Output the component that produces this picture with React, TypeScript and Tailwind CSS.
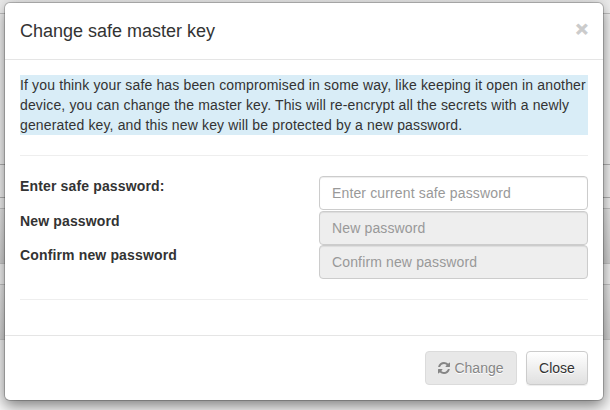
import type { ReactNode } from 'react';

function RefreshIcon() {
  return (
    <svg viewBox="0 128 1536 1536" className="mr-1 h-3 w-3 fill-current" aria-hidden="true">
      <path d="M1511 1056q0 5-1 7-64 268-268 434.5t-478 166.5q-146 0-282.5-55t-243.5-157l-129 129q-19 19-45 19t-45-19-19-45v-448q0-26 19-45t45-19h448q26 0 45 19t19 45-19 45l-137 137q71 66 161 102t187 36q134 0 250-65t186-179q11-17 53-117 8-23 30-23h192q13 0 22.5 9.5t9.5 22.5zm25-800v448q0 26-19 45t-45 19h-448q-26 0-45-19t-19-45 19-45l138-138q-148-137-349-137-134 0-250 65t-186 179q-11 17-53 117-8 23-30 23h-199q-13 0-22.5-9.5t-9.5-22.5v-7q65-268 270-434.5t480-166.5q146 0 284 55.5t245 156.5l130-129q19-19 45-19t45 19 19 45z" />
    </svg>
  );
}

function Field({ label, placeholder, disabled, className }: { label: ReactNode; placeholder: string; disabled?: boolean; className?: string }) {
  return (
    <div className={`flex justify-between ${className ?? ''}`}>
      <label className="h-5 font-bold leading-5">{label}</label>
      <input
        type="text"
        placeholder={placeholder}
        disabled={disabled}
        className="h-[34px] w-[269px] rounded border border-[#ccc] bg-white px-3 py-1.5 leading-5 tracking-[0.14px] shadow-[inset_0_1px_1px_rgba(0,0,0,0.075)] placeholder:text-[#999] disabled:bg-[#eee]"
      />
    </div>
  );
}

function PageBehind() {
  return (
    <div className="flex h-full flex-col bg-[#fafafa]">
      <div className="h-[14px] border-b border-[#c8c8c8] bg-gradient-to-b from-[#ececec] to-[#fafafa]" />
      <div className="h-[151px] border-b border-[#b8b8b8]" />
      <div className="h-[33px] border-b border-[#b8b8b8]" />
      <div className="h-[10px]" />
      <div className="h-[56px] border-y border-[#ccc] bg-gradient-to-b from-[#f0f0f0] to-[#dadada]" />
      <div className="h-[20px]" />
      <div className="h-[56px] border-y border-[#ccc] bg-gradient-to-b from-[#f0f0f0] to-[#dadada]" />
    </div>
  );
}

export default function App() {
  return (
    <div className="relative h-[410px] w-[610px] overflow-hidden bg-white font-['Liberation_Sans',Arial,sans-serif] text-[14px] leading-5 text-[#333]">
      <PageBehind />
      <div
        role="dialog"
        className="absolute left-1 top-0.5 w-[600px] rounded-md border border-black/20 bg-white bg-clip-padding shadow-[0_5px_15px_rgba(0,0,0,0.5)]"
      >
        <div className="flex h-[57px] justify-between border-b border-[#e5e5e5] p-[15px]">
          <h4 className="text-[18px] font-normal leading-[26px]">Change safe master key</h4>
          <button className="h-[21px] text-[21px] font-bold leading-[21px] text-black opacity-20 [-webkit-text-stroke:1px_black]">×</button>
        </div>
        <div className="p-[15px] tracking-[0.145px]">
          <p className="whitespace-nowrap bg-[#d9edf7]">
            If you think your safe has been compromised in some way, like keeping it open in another
            <br />
            device, you can change the master key. This will re-encrypt all the secrets with a newly
            <br />
            generated key, and this new key will be protected by a new password.
          </p>
          <hr className="my-5 border-t border-[#eee]" />
          <Field label="Enter safe password:" placeholder="Enter current safe password" className="h-[35px]" />
          <Field label="New password" placeholder="New password" disabled />
          <Field label="Confirm new password" placeholder="Confirm new password" disabled />
          <hr className="my-5 border-t border-[#eee]" />
        </div>
        <div className="flex justify-end gap-[9px] border-t border-[#e5e5e5] p-[15px]">
          <button
            disabled
            className="flex h-[34px] w-[92px] items-center justify-center rounded border border-[#dbdbdb] bg-[#e8e8e8] text-[#858585] [text-shadow:0_1px_0_#fff]"
          >
            <RefreshIcon />
            Change
          </button>
          <button className="h-[34px] w-[62px] rounded border border-[#ccc] bg-gradient-to-b from-white to-[#e0e0e0] shadow-[inset_0_1px_0_rgba(255,255,255,0.15),0_1px_1px_rgba(0,0,0,0.075)] [text-shadow:0_1px_0_#fff]">
            Close
          </button>
        </div>
      </div>
    </div>
  );
}
